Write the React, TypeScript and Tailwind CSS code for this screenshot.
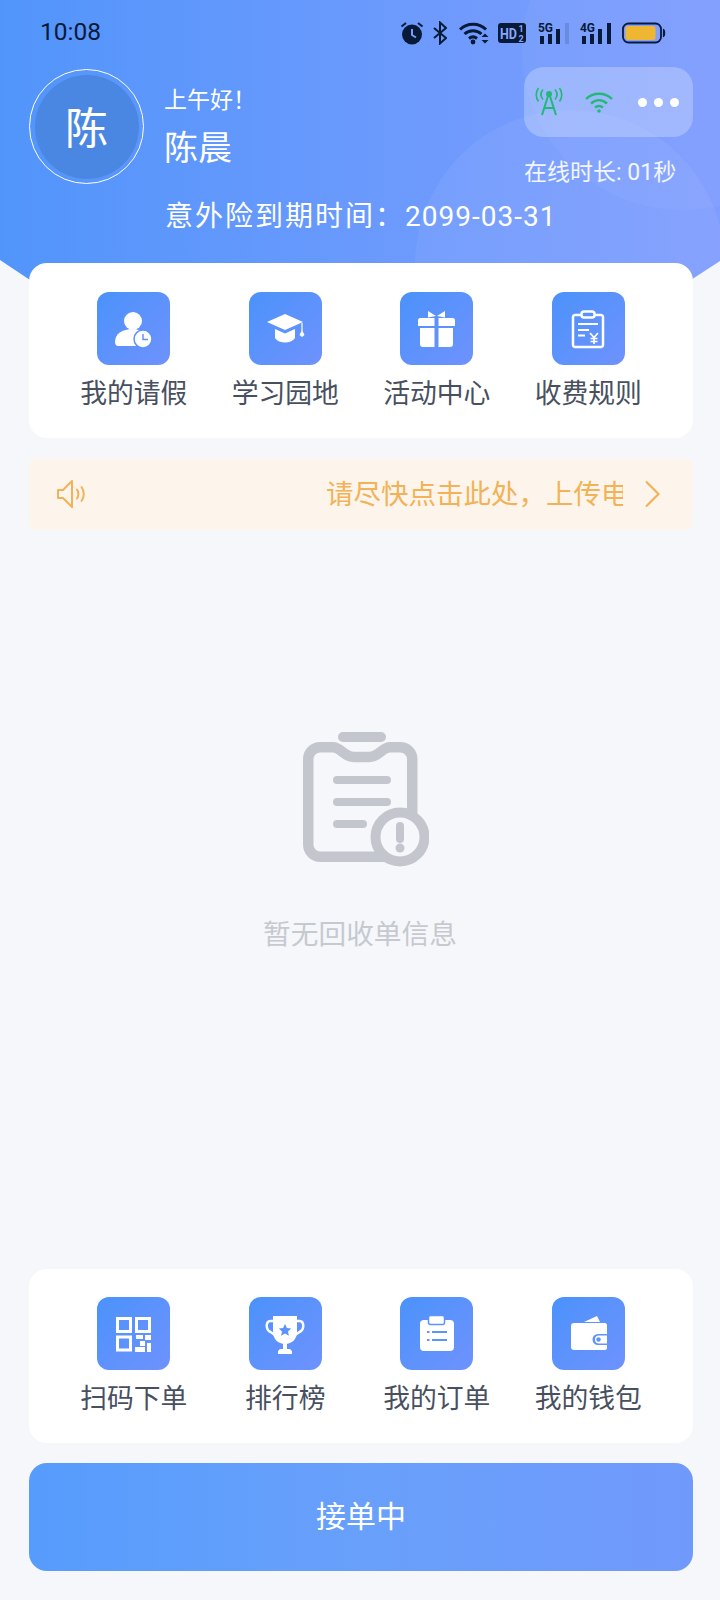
import type { ReactNode } from "react";

const FONT = "font-['Roboto','Noto_Sans_CJK_SC',sans-serif]";

function Tile({ label, children }: { label: string; children: ReactNode }) {
  return (
    <div className="flex flex-col items-center">
      <div className="w-[73px] h-[73px] rounded-[12px] bg-gradient-to-br from-[#4a92fb] to-[#6e92fd]">
        <svg width="73" height="73" viewBox="0 0 73 73">{children}</svg>
      </div>
      <div className="mt-[14px] text-[26.800px] leading-[30px] text-[#48505f] whitespace-nowrap">{label}</div>
    </div>
  );
}

function TileRow({ children, className }: { children: ReactNode; className: string }) {
  return (
    <div className={`relative z-10 ml-[29px] mr-[27px] rounded-[18px] bg-white px-[29px] grid grid-cols-4 justify-items-center ${className}`}>
      {children}
    </div>
  );
}

function StatusIcons() {
  return (
    <div className="ml-auto mr-[54px] flex items-center text-[#071a38] translate-y-[1px]">
      {/* alarm clock */}
      <svg width="24" height="24" viewBox="0 0 24 24" className="mr-[9px]">
        <circle cx="12" cy="13.500" r="10" fill="#071a38" />
        <path d="M12 8v6l4 2.500" stroke="#7b9bfb" strokeWidth="2" fill="none" />
        <path d="M1.500 5.500 6 2M22.500 5.500 18 2" stroke="#071a38" strokeWidth="2" />
      </svg>
      {/* bluetooth */}
      <svg width="14" height="24" viewBox="0 0 14 24" className="mr-[12px]">
        <path d="M1 7l12 10-6 5.500V1.500L13 7 1 17" stroke="#071a38" strokeWidth="2" fill="none" />
      </svg>
      {/* wifi with activity arrows */}
      <svg width="30" height="24" viewBox="0 0 30 24" className="mr-[9px]">
        <path d="M1 8.500C8 1.500 20 1.500 27 8.500" stroke="#071a38" strokeWidth="3" fill="none" />
        <path d="M5.500 13c5-4.500 12-4.500 17 0" stroke="#071a38" strokeWidth="3" fill="none" />
        <path d="M10 17.500c2.500-2 5.500-2 8 0" stroke="#071a38" strokeWidth="3" fill="none" />
        <circle cx="14" cy="21" r="2.400" fill="#071a38" />
        <path d="M22.500 16h7l-3.500-3.500zM22.500 19h7l-3.500 3.500z" fill="#071a38" />
      </svg>
      {/* HD call badge */}
      <svg width="28" height="20" viewBox="0 0 28 20" className="mr-[12px] overflow-visible">
        <rect width="28" height="20" rx="3" fill="#071a38" />
        <text x="2" y="15.500" fontSize="14.500" fontWeight="700" fontFamily="Roboto" textLength="17" lengthAdjust="spacingAndGlyphs" fill="#8aa6fb">HD</text>
        <text x="20.500" y="9" fontSize="9" fontWeight="700" fontFamily="Roboto" fill="#8aa6fb">1</text>
        <text x="20.500" y="18.500" fontSize="9" fontWeight="700" fontFamily="Roboto" fill="#8aa6fb">2</text>
      </svg>
      {/* 5G signal */}
      <svg width="32" height="24" viewBox="0 0 32 24" className="mr-[10px] overflow-visible">
        <text x="0" y="11" fontSize="13.500" fontWeight="700" fontFamily="Roboto" textLength="15" lengthAdjust="spacingAndGlyphs" fill="#071a38">5G</text>
        <rect x="2" y="15" width="4" height="8" fill="#071a38" />
        <rect x="10" y="13" width="4" height="10" fill="#071a38" />
        <rect x="18" y="8" width="4" height="15" fill="#071a38" />
        <rect x="27" y="2" width="4" height="21" fill="#071a38" opacity="0.15" />
      </svg>
      {/* 4G signal */}
      <svg width="32" height="24" viewBox="0 0 32 24" className="mr-[10px] overflow-visible">
        <text x="0" y="11" fontSize="13.500" fontWeight="700" fontFamily="Roboto" textLength="15" lengthAdjust="spacingAndGlyphs" fill="#071a38">4G</text>
        <rect x="2" y="15" width="4" height="8" fill="#071a38" />
        <rect x="10" y="13" width="4" height="10" fill="#071a38" />
        <rect x="18" y="8" width="4" height="15" fill="#071a38" />
        <rect x="27" y="2" width="4" height="21" fill="#071a38" />
      </svg>
      {/* battery */}
      <svg width="44" height="22" viewBox="0 0 44 22">
        <rect x="1" y="1.500" width="38" height="19" rx="5.500" fill="none" stroke="#071a38" strokeWidth="1.800" />
        <rect x="3.500" y="4" width="30" height="14" rx="3" fill="#efb731" />
        <path d="M41.500 7.500c1.500.5 1.500 6.500 0 7z" fill="#071a38" stroke="#071a38" strokeWidth="1.200" />
      </svg>
    </div>
  );
}

export default function App() {
  return (
    <div className={`${FONT} relative w-[720px] h-[1600px] overflow-hidden flex flex-col bg-[#f5f7fb]`}>
      <header className="relative h-[300px] shrink-0 overflow-hidden bg-gradient-to-r from-[#5195fb] to-[#7f9dfe] [clip-path:polygon(0_0,100%_0,100%_261px,660px_300px,60px_300px,0_260px)]">
        {/* soft background bubbles */}
        <div className="absolute left-[415px] top-[110px] w-[310px] h-[310px] rounded-full bg-white/[0.06]" />
        <div className="absolute left-[522px] top-[-110px] w-[320px] h-[320px] rounded-full bg-white/[0.035]" />

        <div className="relative flex items-center h-[64px] pl-[40px]">
          <span className="text-[24.500px] leading-[28px] text-[#071a38]">10:08</span>
          <StatusIcons />
        </div>

        <div className="relative flex mt-[5px] pl-[29px] pr-[27px]">
          <div className="w-[115px] h-[115px] shrink-0 rounded-full border border-white flex items-center justify-center">
            <div className="w-[104px] h-[104px] pt-[6px] rounded-full bg-[#4a87e3] flex items-center justify-center text-white text-[43px] leading-none">陈</div>
          </div>
          <div className="ml-[20px] text-white">
            <div className="mt-[17px] text-[23px] leading-[30px]">上午好！</div>
            <div className="mt-[12px] text-[34px] leading-[40px]">陈晨</div>
          </div>
          <div className="ml-auto w-[169px] flex flex-col">
            <div className="mt-[-2px] h-[70px] rounded-[20px] bg-white/25 flex items-center pl-[11px]">
              <svg width="28" height="30" viewBox="0 0 28 30" fill="none" stroke="#21b975" strokeWidth="2">
                <path d="M14 6 7 28M14 6l7 22M9.500 21h9" />
                <circle cx="14" cy="7" r="2" fill="#21b975" />
                <path d="M8 2.500c-2.500 3-2.500 7 0 10M20 2.500c2.500 3 2.500 7 0 10M3.500 1c-3 4-3 9.500 0 13.500M24.500 1c3 4 3 9.500 0 13.500" strokeWidth="1.600" />
              </svg>
              <svg width="28" height="24" viewBox="0 0 28 24" fill="none" stroke="#21b975" strokeWidth="2.400" className="ml-[22px]">
                <path d="M1 9c7-7 19-7 26 0M6 13.500c5-4.500 11-4.500 16 0M10 17.500c2.500-2 5.500-2 8 0" />
                <circle cx="14" cy="21" r="1.800" fill="#21b975" stroke="none" />
              </svg>
              <div className="ml-[25px] flex gap-[7px]">
                <span className="w-[9px] h-[9px] rounded-full bg-white" />
                <span className="w-[9px] h-[9px] rounded-full bg-white" />
                <span className="w-[9px] h-[9px] rounded-full bg-white" />
              </div>
            </div>
            <div className="mt-[22px] text-[23px] leading-[28px] text-white/90 whitespace-nowrap">在线时长: 01秒</div>
          </div>
        </div>

        <div className="relative mt-[13px] pl-[165px] text-[28px] leading-[34px] tracking-[2px] text-white whitespace-nowrap">
          意外险到期时间：<span className="tracking-[1px]">2099-03-31</span>
        </div>
      </header>

      <TileRow className="-mt-[37px] pt-[29px] h-[175px]">
        <Tile label="我的请假">
          <circle cx="36" cy="29" r="9" fill="#fff" />
          <path d="M18 50c0-8 7-13 18-13 4 0 6 1 8 2v15H21c-2 0-3-2-3-4z" fill="#fff" />
          <circle cx="46" cy="47" r="9" fill="#fff" stroke="#5d93fb" strokeWidth="1.500" />
          <path d="M46 42v5.500h5" fill="none" stroke="#5d93fb" strokeWidth="1.500" />
        </Tile>
        <Tile label="学习园地">
          <path d="M18 30l18-8 18 8-18 8z" fill="#fff" />
          <path d="M26 37l10 4.500L46 37v9c-2 3-6 4.500-10 4.500S28 49 26 46z" fill="#fff" />
          <path d="M53 31v8" stroke="#fff" strokeWidth="1.200" />
          <path d="M50.500 43l2.500-5 2.500 5-2.500 2z" fill="#fff" />
        </Tile>
        <Tile label="活动中心">
          <path d="M28 19l8 5-8 1.500zM45 19l-8 5 8 1.500z" fill="#fff" />
          <path d="M20 26h14.500v8H18v-6c0-1 1-2 2-2zM38.500 26H53c1 0 2 1 2 2v6H38.500z" fill="#fff" />
          <path d="M20 36h14.500v19H23c-2 0-3-1-3-3zM38.500 36H53v16c0 2-1 3-3 3H38.500z" fill="#fff" />
        </Tile>
        <Tile label="收费规则">
          <path d="M29 23h-6c-1 0-2 1-2 2v28c0 1 1 2 2 2h26c1 0 2-1 2-2V25c0-1-1-2-2-2h-6" fill="none" stroke="#fff" strokeWidth="2.500" />
          <rect x="29.500" y="19.500" width="13" height="6" rx="2.500" fill="none" stroke="#fff" strokeWidth="2.500" />
          <path d="M26 32h20M26 38h11M26 43.500h7" stroke="#fff" strokeWidth="2.200" />
          <path d="M38 41l4 4.500 4-4.500M42 45.500V52M38.500 46.500h7M38.500 49.500h7" fill="none" stroke="#fff" strokeWidth="1.700" />
        </Tile>
      </TileRow>

      <div className="mt-[20px] ml-[29px] mr-[27px] h-[72px] shrink-0 rounded-[8px] bg-[#fdf5ec] flex items-center pl-[28px] pr-[33px] text-[#f2b257]">
        <svg width="30" height="30" viewBox="0 0 30 30" fill="none" stroke="currentColor" strokeWidth="2" strokeLinejoin="round">
          <path d="M1 11v8h5l9 9V2l-9 9z" />
          <path d="M20 10.500c1.500 2.500 1.500 6.500 0 9M24.500 8c3 4 3 10 0 14" strokeLinecap="round" />
        </svg>
        <div className="ml-[13px] flex-1 overflow-hidden whitespace-nowrap pl-[226px] pt-[2px] text-[27.500px] leading-[34px]">请尽快点击此处，上传电子健康证</div>
        <svg width="16" height="28" viewBox="0 0 16 28" fill="none" stroke="currentColor" strokeWidth="2.200" className="ml-[21px]">
          <path d="M2 1.500 14.500 14 2 26.500" />
        </svg>
      </div>

      <main className="flex-1 flex flex-col items-center pt-[202px]">
        <svg width="126" height="136" viewBox="0 0 126 136" fill="none" className="ml-[12px]">
          <rect x="35" y="0" width="48" height="10" rx="5" fill="#c3c7cd" />
          <path d="M30 15.250H17.250a12 12 0 0 0-12 12v85.500a12 12 0 0 0 12 12h80a12 12 0 0 0 12-12V27.250a12 12 0 0 0-12-12H87C79 15.250 76 25 66 25H51C41 25 38 15.250 30 15.250z" stroke="#c3c7cd" strokeWidth="10.500" strokeLinejoin="round" />
          <path d="M34 48h50M34 70h50M34 92h26" stroke="#c3c7cd" strokeWidth="8" strokeLinecap="round" />
          <circle cx="97" cy="105" r="24.500" fill="#f5f7fb" stroke="#c3c7cd" strokeWidth="10" />
          <path d="M97 94v13" stroke="#c3c7cd" strokeWidth="8" strokeLinecap="round" />
          <circle cx="97" cy="116" r="4.500" fill="#c3c7cd" />
        </svg>
        <div className="mt-[50px] text-[27.700px] leading-[34px] text-[#c6c9cf]">暂无回收单信息</div>
      </main>

      <TileRow className="h-[174px] pt-[28px] shrink-0">
        <Tile label="扫码下单">
          <path d="M20.500 21.500h13v13h-13zM39.500 21.500h13v13h-13zM20.500 40h13v13h-13z" fill="none" stroke="#fff" strokeWidth="3" />
          <path d="M39 38h7v4h-7zM48 38h6v5h-6zM43 44h5v5h-5zM50 46h4v9h-4zM38 50h10v5H38z" fill="#fff" />
        </Tile>
        <Tile label="排行榜">
          <path d="M24 19h24v16c0 7-5 12-12 12s-12-5-12-12z" fill="#fff" />
          <path d="M24 24h-2.500c-5 0-5 9 0 11L26 38M48 24h2.500c5 0 5 9 0 11L46 38" fill="none" stroke="#fff" strokeWidth="2.500" />
          <path d="M34 46h4v6h-4zM32 52h8c2 0 3 2 3 3v2H29v-2c0-1 1-3 3-3z" fill="#fff" />
          <path d="M36 27l1.900 4 4.300.5-3.200 3 .9 4.300-3.900-2.200-3.900 2.200.9-4.300-3.200-3 4.300-.5z" fill="#5d93fb" />
        </Tile>
        <Tile label="我的订单">
          <rect x="20" y="23" width="34" height="31" rx="4" fill="#fff" />
          <rect x="28.500" y="18.500" width="16" height="9" rx="2" fill="#fff" stroke="#5d93fb" strokeWidth="1.500" />
          <path d="M32 35h15M32 43h15" stroke="#5d93fb" strokeWidth="2" />
          <path d="M27 35h2.500M27 43h2.500" stroke="#5d93fb" strokeWidth="2" />
        </Tile>
        <Tile label="我的钱包">
          <path d="M32 25l13-6 3 6z" fill="#fff" />
          <path d="M22 26h31c1 0 2 1 2 2v9H46a5.500 5.500 0 0 0 0 11h9v3c0 1-1 2-2 2H22c-2 0-3-1-3-3V29c0-2 1-3 3-3z" fill="#fff" />
          <path d="M47 38.500h8v8h-8a4 4 0 0 1 0-8z" fill="#fff" />
          <circle cx="46.500" cy="42.500" r="2.200" fill="#5d93fb" />
        </Tile>
      </TileRow>

      <button className="mt-[20px] mb-[29px] ml-[29px] mr-[27px] h-[108px] pb-[2px] shrink-0 rounded-[18px] bg-gradient-to-r from-[#569cfc] via-[#68a0fb] to-[#7099fc] text-white text-[30px]">
        接单中
      </button>
    </div>
  );
}
